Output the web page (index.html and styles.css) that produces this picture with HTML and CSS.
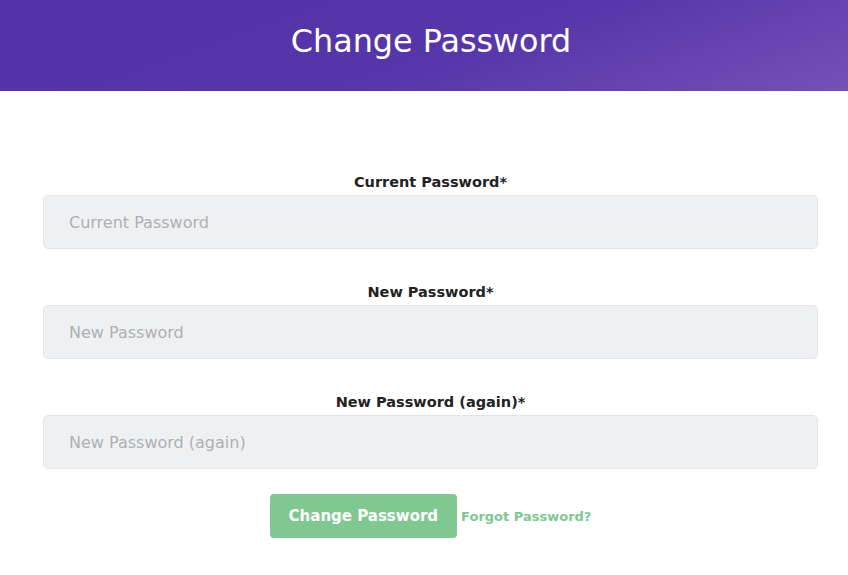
FILE: index.html
```html
<!DOCTYPE html>
<html lang="en">
<head>
<meta charset="utf-8">
<title>Change Password</title>
<link rel="stylesheet" href="styles.css">
</head>
<body>
<header class="banner">
  <h1 class="banner-title">Change Password</h1>
</header>
<main class="content">
  <form class="pw-form">
    <div class="field">
      <label class="field-label" for="cur">Current Password*</label>
      <input class="field-input" id="cur" type="password" placeholder="Current Password">
    </div>
    <div class="field">
      <label class="field-label" for="new1">New Password*</label>
      <input class="field-input" id="new1" type="password" placeholder="New Password">
    </div>
    <div class="field">
      <label class="field-label" for="new2">New Password (again)*</label>
      <input class="field-input" id="new2" type="password" placeholder="New Password (again)">
    </div>
    <div class="actions">
      <button class="btn-submit" type="button">Change Password</button>
      <a class="forgot" href="#">Forgot Password?</a>
    </div>
  </form>
</main>
</body>
</html>
```
FILE: styles.css
```css
* { box-sizing: border-box; }
html, body { margin: 0; padding: 0; background: #fff; }
body {
  font-family: "DejaVu Sans", "Open Sans", sans-serif;
  color: #222;
}
.banner {
  height: 91px;
  display: flex;
  align-items: center;
  justify-content: center;
  padding-left: 14px;
  background: linear-gradient(160deg, #5432a8 0%, #5636a9 55%, #7450b8 100%);
}
.banner-title {
  margin: 0;
  color: #fff;
  font-weight: 400;
  font-size: 31.8px;
  line-height: 38px;
  padding-bottom: 10px;
}
.content {
  padding: 80px 30px 0 43px;
}
.pw-form {
  display: flex;
  flex-direction: column;
}
.field {
  display: flex;
  flex-direction: column;
  align-items: center;
}
.field + .field { margin-top: 32px; }
.field-label {
  font-weight: 700;
  font-size: 14.5px;
  line-height: 22px;
  color: #222;
  margin-bottom: 2px;
}
.field-input {
  width: 100%;
  height: 54px;
  border: 1px solid #e3e5e8;
  border-radius: 5px;
  background: #eff0f2;
  padding: 0 25px;
  font-family: inherit;
  font-size: 16px;
  color: #333;
}
.field-input::placeholder { color: #adb0b5; }
.actions {
  display: flex;
  align-items: center;
  justify-content: center;
  gap: 4px;
  margin-top: 25px;
}
.btn-submit {
  height: 44px;
  padding: 0 19px;
  border: none;
  border-radius: 4px;
  background: #80c891;
  color: #fff;
  font-family: inherit;
  font-weight: 700;
  font-size: 15px;
}
.forgot {
  color: #80c891;
  font-weight: 700;
  font-size: 13px;
  text-decoration: none;
}
```
